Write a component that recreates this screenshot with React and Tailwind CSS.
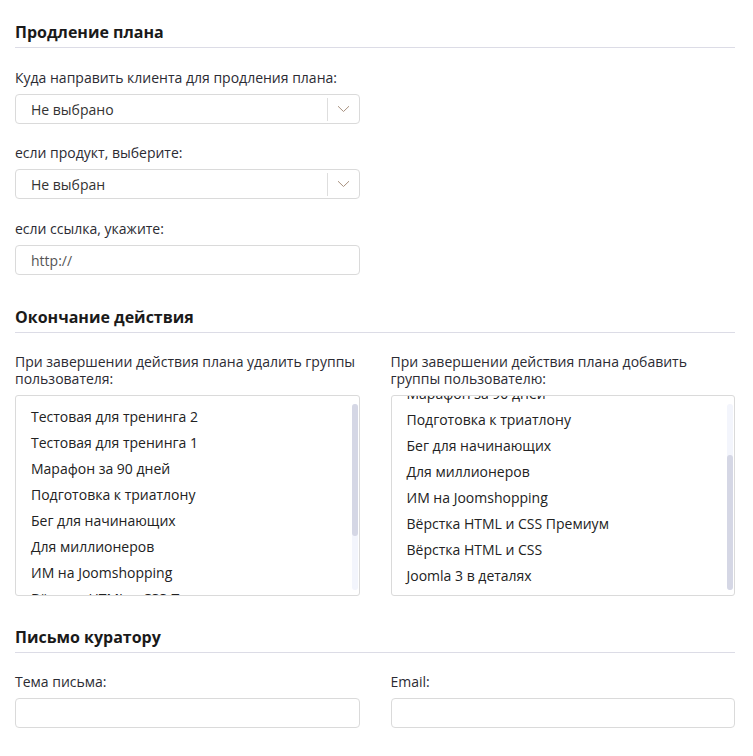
import React from "react";

const items = [
  "Тестовая для тренинга 2",
  "Тестовая для тренинга 1",
  "Марафон за 90 дней",
  "Подготовка к триатлону",
  "Бег для начинающих",
  "Для миллионеров",
  "ИМ на Joomshopping",
  "Вёрстка HTML и CSS Премиум",
  "Вёрстка HTML и CSS",
  "Joomla 3 в деталях",
];

function Heading({ children, className = "" }) {
  return (
    <div className={"border-b border-[#dcdce6] pb-[4px] " + className}>
      <h2 className="text-[16px] leading-[22px] font-bold text-[#1a1a1a]">{children}</h2>
    </div>
  );
}

function Label({ children }) {
  return <div className="text-[14px] leading-[17px] text-[#2b2b33] mb-[8px]">{children}</div>;
}

function Select({ value }) {
  return (
    <div className="flex items-center h-[30px] w-[345px] border border-[#dadada] rounded-[4px] bg-white">
      <span className="flex-1 pl-[15px] text-[14px] text-[#333]">{value}</span>
      <span className="w-px h-[23px] bg-[#dedede]"></span>
      <span className="w-[31px] flex items-center justify-center">
        <svg width="13" height="8" viewBox="0 0 13 8" fill="none">
          <path d="M1 1.2 L6.5 6.5 L12 1.2" stroke="#a8917f" strokeWidth="1" />
        </svg>
      </span>
    </div>
  );
}

function Input({ placeholder = "", full = false }) {
  return (
    <div
      className={
        "flex items-center h-[30px] border border-[#dadada] rounded-[4px] bg-white " +
        (full ? "w-full" : "w-[345px]")
      }
    >
      <span className="pl-[15px] text-[14px] text-[#555]">{placeholder}</span>
    </div>
  );
}

function ListBox({ scrolled }) {
  return (
    <div className="relative h-[201px] border border-[#dadada] rounded-[3px] bg-white overflow-hidden">
      <div className={"pt-[8px] pb-[8px] " + (scrolled ? "-mt-[75px]" : "")}>
        {items.map((it) => (
          <div key={it} className="pl-[15px] text-[14px] leading-[26px] text-[#222] whitespace-nowrap">
            {it}
          </div>
        ))}
      </div>
      <div className="absolute right-[1px] top-[8px] bottom-[5px] w-[6px] rounded-full bg-[#f3f5fc]">
        <div
          className={
            "absolute left-0 right-0 rounded-full bg-[#d5d7e5] " +
            (scrolled ? "bottom-0 h-[135px]" : "top-0 h-[132px]")
          }
        ></div>
      </div>
    </div>
  );
}

export default function App() {
  return (
    <div
      className="bg-white w-[753px] h-[756px] pl-[15px] pr-[18px] pt-[21px]"
      style={{ fontFamily: '"Open Sans", "Noto Sans", sans-serif' }}
    >
      <Heading>Продление плана</Heading>
      <div className="pt-[21px]">
        <Label>Куда направить клиента для продления плана:</Label>
        <Select value="Не выбрано" />
        <div className="mt-[20px]">
          <Label>если продукт, выберите:</Label>
          <Select value="Не выбран" />
        </div>
        <div className="mt-[21px]">
          <Label>если ссылка, укажите:</Label>
          <Input placeholder="http://" />
        </div>
      </div>

      <Heading className="mt-[31px]">Окончание действия</Heading>
      <div className="pt-[20px] grid grid-cols-2 gap-x-[31px]">
        <div>
          <Label>При завершении действия плана удалить группы пользователя:</Label>
          <ListBox />
        </div>
        <div>
          <Label>При завершении действия плана добавить группы пользователю:</Label>
          <ListBox scrolled />
        </div>
      </div>

      <Heading className="mt-[30px]">Письмо куратору</Heading>
      <div className="pt-[20px] grid grid-cols-2 gap-x-[31px]">
        <div>
          <Label>Тема письма:</Label>
          <Input full />
        </div>
        <div>
          <Label>Email:</Label>
          <Input full />
        </div>
      </div>
    </div>
  );
}
